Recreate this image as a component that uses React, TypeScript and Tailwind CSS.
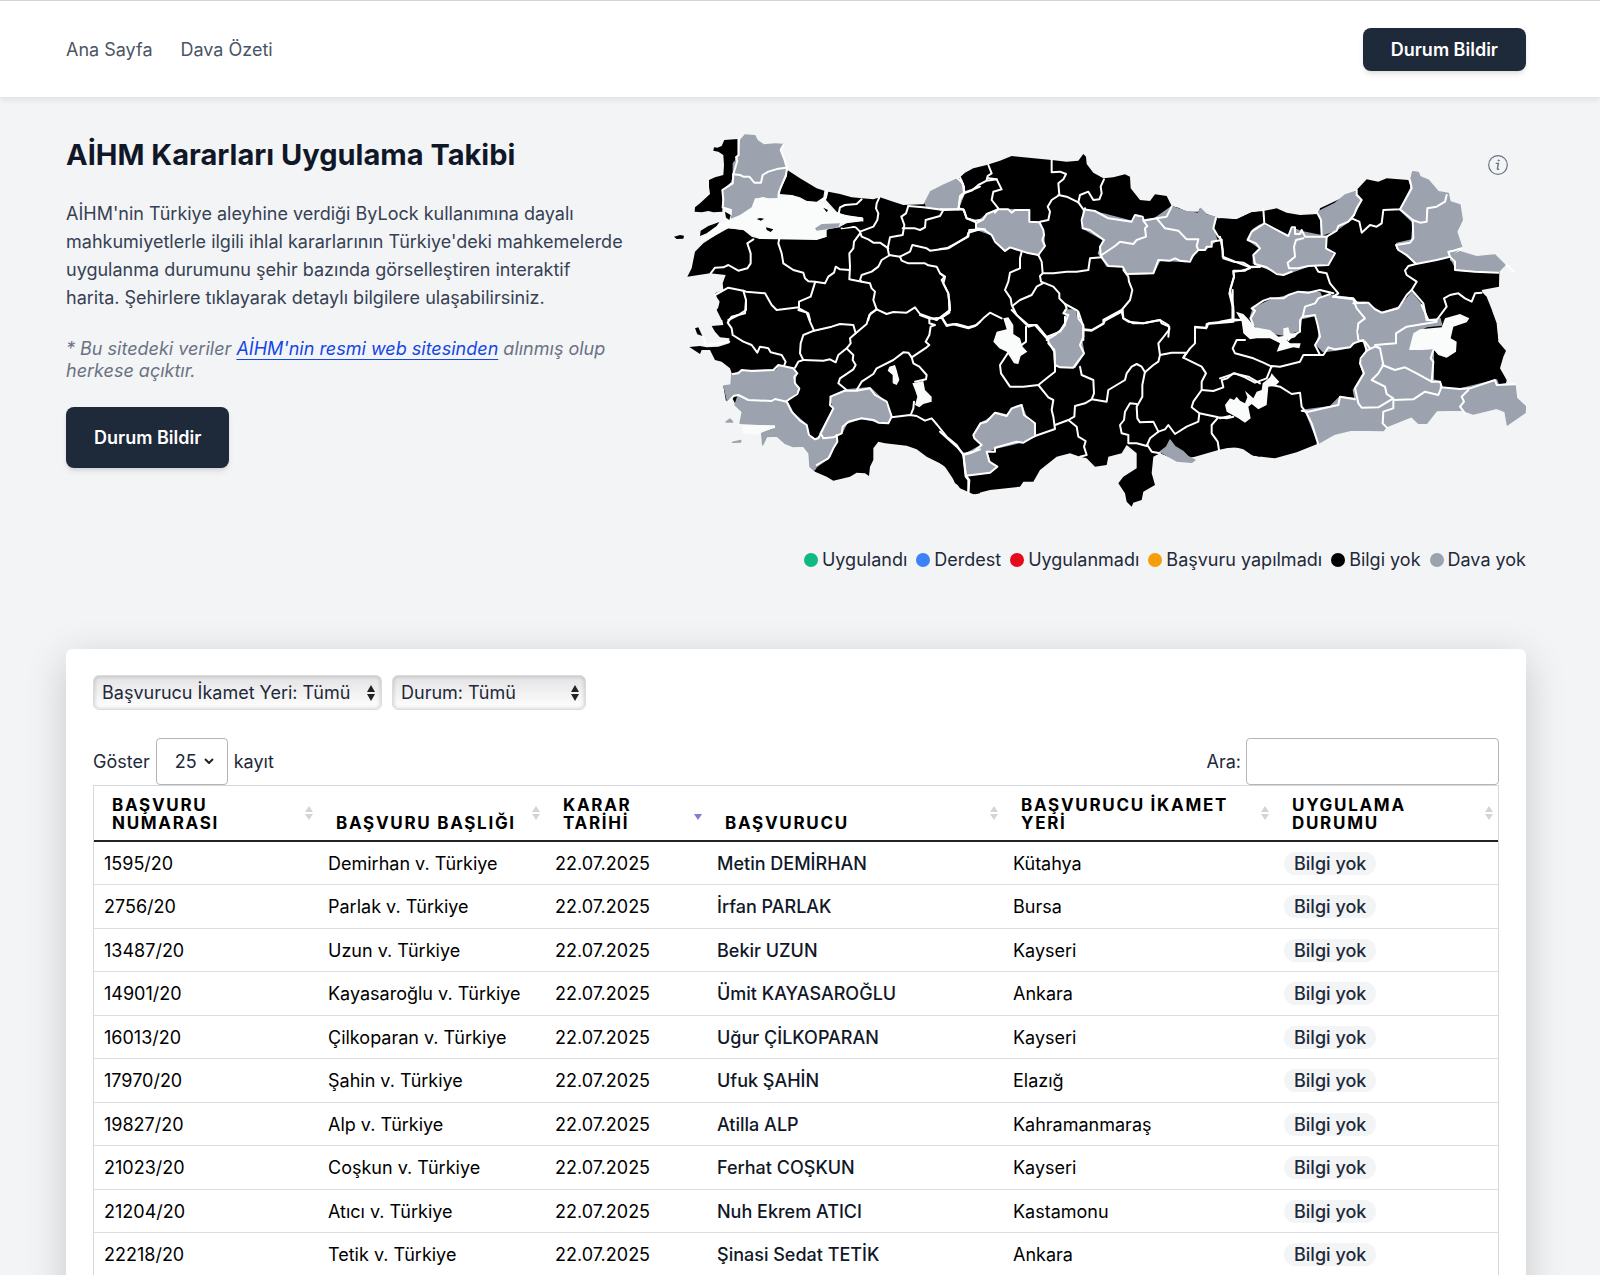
import React from 'react';

const SEA = '#fafbfb';
const NONE = '#9ca3af';

type Sheet = { x: number; y: number; land: string[]; empty: string[]; lines: string[]; water: string[] };

const sheets: Sheet[] = [
  {
    x: 0,
    y: 0,
    land: [
      'M193,60 L233,57 L233,105 L225,120 L218,165 L215,185 L188,210 L187,275 L160,277 L145,273 L125,277 L104,275 L105,262 L120,250 L150,222 L147,200 L147,180 L165,172 L190,165 L192,135 L190,105 L175,95 L160,92 L162,82 L172,83 L185,78Z',
      'M382,150 L420,175 L470,205 L493,212 L490,232 L470,245 L440,243 L420,232 L395,225 L360,222 L362,205 L380,170Z',
      'M505,215 L540,222 L575,232 L640,238 L660,232 L700,245 L730,255 L790,253 L905,172 L960,140 L960,600 L185,600 L170,570 L183,550 L172,535 L165,520 L190,510 L188,490 L197,465 L150,460 L82,470 L95,445 L105,395 L130,370 L160,350 L180,330 L205,325 L250,330 L275,350 L300,357 L330,350 L360,345 L400,350 L440,350 L475,358 L500,350 L490,330 L540,322 L560,312 L608,304 L608,292 L560,287 L530,275 L498,240Z',
    ],
    empty: [
      'M242,60 L255,45 L285,47 L292,62 L312,75 L345,72 L370,73 L362,90 L378,140 L325,152 L308,165 L303,188 L285,188 L268,170 L220,163 L220,130 L235,115Z',
      'M220,163 L268,170 L285,188 L303,188 L308,165 L325,152 L378,145 L378,165 L358,215 L352,232 L330,235 L310,228 L285,235 L275,262 L240,285 L215,295 L213,270 L190,262 L188,212 L215,195Z',
      'M795,248 L812,215 L850,195 L890,178 L905,180 L915,215 L895,265 L850,270 L800,262Z',
    ],
    lines: [
      'M236,57 L236,105 L228,112 L232,122 L220,163 L218,190 L187,210 L190,240 L188,262 L213,270 L212,285',
      'M220,163 L240,165 L250,170 L268,170 L283,188 L303,188 L308,165 L325,155 L355,146 L378,143',
      'M370,75 L362,90 L372,115 L381,145 L378,165 L357,215 L355,230',
      'M500,213 L498,232 L485,242',
      'M605,238 L590,252 L555,255 L540,262 L535,285',
      'M658,232 L650,250 L648,265 L655,280 L652,300 L640,320 L600,335',
      'M545,325 L585,320 L600,335 L605,350 L625,358 L640,368 L660,368 L685,385',
      'M745,258 L738,280 L724,290 L733,315 L728,345 L690,352 L683,385 L687,405 L720,410',
      'M728,325 L765,325 L780,330 L795,322 L797,300 L840,288 L850,270',
      'M600,340 L582,365 L580,385 L568,400 L570,440 L568,478 L605,485 L630,490 L635,505 L645,515 L640,540 L650,568',
      'M690,405 L665,420 L655,440 L635,455 L605,465 L600,480 L605,485',
      'M720,410 L725,422 L745,430 L795,430 L805,436 L830,440 L840,460 L855,470 L845,480 L865,520 L870,570 L850,585 L830,600',
      'M720,410 L750,395 L757,375 L800,385 L810,392 L865,385 L922,350 L925,338 L960,328',
      'M650,568 L680,582 L700,576 L740,578 L765,562 L780,582 L830,600',
      'M650,568 L628,585 L625,600',
      'M152,460 L165,443 L190,442 L205,435 L235,452 L262,445 L272,430 L272,400 L262,370 L280,358',
      'M360,345 L355,370 L365,400 L370,430 L400,450 L430,458 L435,475 L445,484 L465,485 L495,490 L505,470 L522,458 L527,440 L540,448 L568,450',
      'M465,488 L452,530 L417,545 L417,565 L445,580 L450,600',
      'M165,525 L205,503 L250,512 L258,515 L315,520 L335,555 L350,570 L417,562',
      'M250,512 L258,540 L258,570 L235,585 L205,600',
      'M745,258 L790,262 L850,270 L910,268 L920,295 L945,302 L960,300',
      'M893,175 L908,190 L912,218 L900,228 L895,268 M912,218 L935,210 L960,200',
    ],
    water: [
      'M352,235 L395,225 L440,243 L470,247 L490,250 L530,280 L610,294 L610,305 L540,310 L500,330 L500,350 L470,360 L300,357 L250,330 L205,325 L160,350 L120,365 L125,350 L180,310 L240,285 L275,262 L285,235Z',
    ],
  },
  {
    x: 0,
    y: 540,
    land: [
      'M180,0 L175,22 L200,40 L185,50 L190,75 L155,78 L165,95 L180,112 L208,115 L208,130 L175,140 L140,142 L120,138 L88,141 L120,162 L125,150 L150,150 L165,180 L185,185 L210,205 L215,220 L213,255 L190,258 L198,303 L215,290 L230,320 L248,335 L245,370 L345,375 L340,385 L305,400 L308,435 L320,410 L355,410 L375,430 L400,440 L430,438 L447,460 L450,500 L465,515 L500,530 L520,542 L570,530 L590,518 L615,520 L627,528 L630,500 L640,480 L640,445 L655,425 L675,430 L740,437 L770,448 L800,470 L850,495 L870,515 L885,550 L920,572 L945,583 L960,580 L960,0Z',
      'M105,85 L115,82 L127,108 L112,103Z',
    ],
    empty: [
      'M215,225 L245,212 L350,210 L355,198 L400,207 L410,220 L403,245 L417,270 L380,303 L350,298 L260,298 L235,285 L215,290 L203,305 L192,258 L213,255Z',
      'M235,285 L260,298 L350,298 L383,308 L400,340 L440,375 L447,410 L465,417 L485,405 L530,405 L528,425 L510,470 L470,500 L463,510 L450,500 L447,460 L430,438 L400,440 L375,430 L350,408 L320,410 L308,435 L305,400 L345,385 L345,375 L240,370 L247,335 L225,315Z',
      'M510,290 L555,270 L630,263 L675,305 L692,350 L685,370 L600,355 L560,370 L545,400 L490,415 L480,400 L520,325Z',
      'M217,427 L242,421 L242,426Z',
      'M198,366 L210,357 L218,366Z',
    ],
    lines: [
      'M258,0 L255,40 L215,50 L203,68 L215,85 L218,105 L250,125 L275,135 L292,158 L300,140 L325,145 L332,157 L365,165 L377,185 L372,198',
      'M415,30 L440,38 L450,65 L462,92 L430,105 L422,130 L420,160 L430,180 L415,185 L405,203',
      'M462,92 L515,80 L540,72 L580,75 L587,100 L570,115 L572,130 L560,145 L535,165 L527,187 L510,178 L490,182 L430,180',
      'M587,100 L620,72 L625,55 L632,40 L650,28',
      'M560,145 L580,165 L578,180 L587,195 L580,208 L540,235 L535,250 L560,270',
      'M590,270 L605,245 L640,222 L650,205 L700,180 L730,157 L745,158 L755,172 L800,142 L808,135 L797,125 L808,105 L812,80 L825,75 L808,70 L808,56',
      'M755,172 L760,190 L778,200 L800,225 L798,238 L765,245',
      'M780,45 L808,56 L845,53 L860,78 L880,73 L925,85 L945,78 L960,65',
      'M845,53 L868,38 L868,0',
      'M218,222 L235,220 L245,210 L275,213 L340,210 L355,195 L400,205 L412,220 L403,230 L405,250 L418,265 L412,282 L380,303',
      'M205,305 L222,287 L235,285 L265,300 L335,303 L345,297 L380,305 L395,335 L420,362 L440,375 L447,405 L465,418 L475,415 L500,365 L520,325 L510,315 L512,290 L555,272 L590,272 L630,265 L645,285 L680,305 L695,350 L685,370 L655,368 L640,360 L605,355 L565,365 L548,380 L545,400 L520,412 L490,415 L485,405',
      'M530,405 L532,425 L520,445 L505,475 L470,495',
      'M695,352 L750,345 L770,348 L795,362 L815,355 L832,375 L860,410 L890,435 L910,465 L935,458 L960,448',
      'M752,345 L760,325 L762,305',
      'M910,465 L917,530 L925,540 L925,575',
      'M130,112 L137,135 L208,125',
    ],
    water: [
      'M688,200 L705,195 L710,210 L718,240 L710,255 L698,250 L698,225 L683,212Z',
      'M757,250 L790,243 L795,270 L815,290 L815,305 L790,312 L778,322 L765,315 L772,290 L765,270Z',
      'M247,376 L345,376 L345,384 L305,395 L300,405 L247,400Z',
    ],
  },
  {
    x: 840,
    y: 60,
    land: [
      'M0,145 L60,112 L75,98 L100,85 L140,75 L180,62 L215,48 L335,60 L380,65 L415,62 L430,42 L438,50 L440,72 L460,98 L490,115 L520,112 L555,103 L570,110 L572,145 L600,180 L630,183 L645,163 L680,168 L695,198 L715,203 L740,215 L775,215 L780,205 L800,222 L835,235 L890,238 L935,217 L960,215 L960,600 L0,600Z',
    ],
    empty: [
      'M0,145 L45,120 L60,120 L72,158 L55,205 L0,208Z',
      'M108,250 L140,222 L170,208 L268,210 L268,245 L300,247 L312,285 L312,320 L295,345 L240,332 L210,322 L195,333 L155,285 L110,268Z',
      'M430,210 L490,222 L580,245 L590,225 L610,240 L645,235 L695,200 L740,215 L775,220 L782,205 L800,225 L830,232 L820,265 L830,300 L795,330 L770,330 L755,355 L735,365 L660,360 L640,400 L565,402 L550,380 L500,378 L487,355 L475,340 L490,300 L430,265Z',
      'M960,255 L940,268 L922,298 L960,315Z',
      'M960,325 L942,345 L945,368 L960,375Z',
    ],
    lines: [
      'M60,112 L72,140 L72,160 L95,152 L115,135 L140,122 L170,118 L185,148 L160,155 L155,180 L175,205 L165,218',
      'M145,75 L155,100 L143,108 L140,120 M145,115 L170,118',
      'M72,160 L60,180 L55,208 L0,208',
      'M58,205 L72,210 L80,235 L108,247 L108,265',
      'M135,268 L88,270 L85,290 L20,325 L0,327',
      'M108,250 L130,238 L140,222 L175,208 L205,208 L215,218 L225,210 L268,210 L268,245 L298,247 L310,270 L312,285 L307,300 L315,318 L295,345 L260,338 L210,322 L195,333 L165,305 L155,285 L130,268 L108,265Z',
      'M335,60 L335,97 L360,95 L378,102 L370,118 L355,130 L358,165 L335,180 L323,200 L330,215 L325,240 L300,245',
      'M355,165 L380,170 L415,187 L420,165 L445,155 L460,180 L478,178 L485,160 L482,140 L492,118',
      'M415,187 L430,208 L465,213 L505,235 L575,245 L585,225 L608,230 L612,245 L622,258 L615,265 L618,290 L590,300 L580,312 L540,305 L525,318 L485,345',
      'M435,205 L425,240 L428,265 L450,270 L492,300 L480,320 L482,345 L487,355 L505,378 L548,380 L560,402 L640,400 L655,360 L690,362 L705,355 L720,362 L750,365 L758,348 L775,330 L770,318 L775,298 L740,298 L715,272 L675,265 L650,235',
      'M610,242 L650,235 L680,230 L695,200',
      'M775,330 L795,330 L800,320 L815,320 L815,305 L845,300 L835,290 L820,265 L828,232',
      'M845,300 L850,355 L880,365 L910,368 L930,380 L960,380',
      'M295,345 L305,365 L308,400 L340,400 L380,395 L410,395 L445,390 L450,355 L485,352',
      'M308,400 L300,408 L303,425 L340,440 L358,460 L358,475 L375,492 L412,512 L415,535 L430,555 L430,600',
      'M245,335 L240,355 L240,385 L210,398 L205,425 L195,450 L212,475 L215,495 L230,525 L265,555 L290,555 L325,597',
      'M218,497 L240,480 L275,465 L290,440 L308,430',
      'M550,390 L565,410 L567,425 L577,450 L570,480 L545,510 L490,540 L490,550 L455,570 L430,568',
      'M548,510 L550,535 L565,545 L610,550 L660,540 L665,550 L688,560 L685,590',
      'M375,492 L380,505 L370,520 L385,525 L375,550 L362,570 L345,585 L320,600',
      'M0,400 L15,412 L10,430 L25,460 L30,510 L5,530 L20,555 L50,552 L85,562 L110,555 L130,535 L150,518 L185,535',
      'M930,385 L905,392 L880,395 L882,410 L870,450 L880,500 L880,540',
      'M765,600 L765,562 L800,563 L805,550 L900,540',
    ],
    water: [],
  },
  {
    x: 840,
    y: 570,
    land: [
      'M0,0 L960,0 L960,440 L935,435 L910,418 L880,410 L835,420 L765,440 L710,450 L660,430 L640,440 L635,490 L645,525 L610,545 L605,570 L580,578 L575,590 L560,575 L555,550 L535,520 L550,500 L590,475 L590,430 L560,405 L545,430 L505,440 L500,465 L465,470 L440,445 L420,440 L390,430 L350,440 L300,480 L280,515 L250,515 L240,530 L150,540 L100,553 L60,535 L35,500 L15,470 L0,460Z',
    ],
    empty: [
      'M375,0 L405,0 L410,25 L430,50 L425,90 L432,130 L405,172 L350,168 L343,125 L322,80 L360,65 L380,30Z',
      'M100,375 L120,340 L140,330 L170,308 L200,315 L225,290 L245,285 L262,330 L285,345 L285,380 L230,400 L165,415 L140,425 L150,455 L170,470 L150,488 L78,497 L70,435 L125,405Z',
      'M660,425 L680,410 L690,390 L705,410 L730,425 L745,440 L765,450 L755,457 L710,453Z',
    ],
    lines: [
      'M100,375 L122,340 L140,335 L165,308 L200,318 L215,295 L245,285 L252,315 L285,340 L285,378 L250,398 L230,395 L165,413 L165,425 L140,425 L148,455 L172,470 L150,488 L78,497 L70,432 L100,425 L125,405 L103,385Z',
      'M78,497 L88,510 L85,550',
      'M0,365 L50,410 L70,432',
      'M203,130 L190,150 L180,165 L183,190 L210,230 L250,230 L295,225 L320,205 L345,185 L345,160 L343,120 L325,100',
      'M295,225 L325,262 L340,270 L335,300 L340,320 L345,357 L285,378',
      'M345,345 L385,330 L410,350 L415,380 L437,393 L432,410 L440,435 L420,440',
      'M385,330 L403,320 L405,288 L435,280 L455,268 L462,250 L460,210 L425,195 L420,170',
      'M375,20 L375,45 L360,65 L322,80 L325,95 L343,125 L345,165 L360,172 L400,173 L432,130 L420,105 L430,80 L430,50 L415,5',
      'M455,268 L500,275 L505,240 L555,210 L560,190 L575,170 L590,162 L605,170 L615,187 L640,165 L655,155 L660,135 L655,100 L675,75 L688,58 L685,45 L660,30 L610,40 L580,40 L550,25 L545,5',
      'M430,60 L455,62 L490,42 L495,32 L545,5',
      'M615,185 L607,225 L607,260 L590,290 L592,325 L600,337 L640,335 L655,365 L675,358 L685,345 L705,372 L740,350 L775,335 L778,310 L755,292 L760,275 L785,240 L785,215 L798,190 L785,170 L730,143 L740,128 L695,128 L660,135',
      'M730,143 L750,115 L765,100 L765,50 L798,55 L800,42 L880,35 L880,0',
      'M590,282 L570,280 L555,305 L552,330 L540,345 L545,370 L565,375 L565,400 L590,400 L620,408 L630,385 L655,365',
      'M622,405 L635,425 L660,430',
      'M785,240 L820,243 L850,232 L845,210 L862,205 L880,190 L925,200 L960,220',
      'M778,310 L835,322 L860,325 L880,320 M835,322 L815,345 L815,370 L833,395 L837,420',
      'M258,50 L258,95 L245,105',
      'M215,0 L265,50 L285,45 L320,85',
    ],
    water: ['M190,25 L205,22 L220,45 L220,72 L240,85 L248,110 L262,125 L242,138 L235,162 L222,160 L200,125 L178,115 L160,95 L170,65 L200,58Z'],
  },
  {
    x: 1680,
    y: 60,
    land: [
      'M0,235 L50,238 L95,217 L130,213 L170,205 L200,218 L240,225 L295,222 L300,205 L405,155 L410,150 L440,118 L475,125 L500,115 L565,120 L575,150 L640,150 L660,250 L700,300 L690,360 L720,385 L765,395 L838,395 L837,440 L785,450 L795,475 L815,510 L815,545 L830,570 L835,600 L0,600Z',
    ],
    empty: [
      'M295,215 L345,190 L375,165 L405,155 L425,180 L395,238 L350,270 L305,285 L302,235Z',
      'M572,120 L578,95 L595,97 L600,110 L625,120 L655,155 L685,160 L690,185 L720,195 L727,240 L710,275 L725,320 L690,350 L590,370 L530,325 L530,310 L575,300 L580,248 L540,210 L572,145Z',
      'M690,350 L720,335 L770,350 L825,345 L855,375 L835,395 L765,395 L710,390Z',
      'M130,255 L205,290 L220,265 L245,275 L320,290 L315,325 L340,345 L325,370 L265,378 L190,405 L100,370 L100,345 L120,325 L85,300Z',
    ],
    lines: [
      'M130,208 L133,250 L180,275 L205,288 L215,262 L225,262 L225,282 L240,282 L245,270 L255,290 L320,290 L350,272 L355,258 L385,245 L402,225',
      'M133,250 L95,275 L83,300 L108,310 L120,325 L100,345 L105,372 L140,382 L170,402 L190,405 L215,395',
      'M250,295 L228,300 L222,320 L225,350 L203,368 L207,385 L235,385 L265,378 L325,375 L345,340 L318,325 L320,290',
      'M402,225 L410,205 L425,180 L410,165 L410,150',
      'M290,215 L303,240 L305,285',
      'M395,235 L418,245 L425,278 L450,255 L470,260 L485,250 L490,210 L540,208 L575,145 L570,120',
      'M540,208 L578,240 L600,248 L620,245 L622,205 L650,200 L675,185 L680,165',
      'M578,240 L580,295 L570,308 L528,315 L535,330 L560,345 L588,372 L650,360 L690,350 L685,335 L700,332 L725,325',
      'M588,372 L565,378 L555,392 L560,405 L590,425 L575,450 L610,490 L620,540 L650,540 L680,500 L672,475 L690,465 L715,460 L735,475 L755,485 L765,460 L785,458',
      'M690,350 L705,365 L705,390 L765,395 L835,398',
      'M860,375 L880,393',
      'M0,290 L8,330 L8,350 L45,365 L90,382 L75,392 L40,392 L42,410 L28,460 L38,500 L38,535',
      'M90,382 L120,380',
      'M285,378 L295,395 L320,400 L330,430 L355,460 L340,470',
      'M340,470 L400,475 L410,488 L445,488 L465,508 L485,518 L535,505 L560,465 L575,450',
    ],
    water: [],
  },
  {
    x: 1680,
    y: 510,
    land: [
      'M0,90 L300,50 L560,60 L600,50 L640,100 L690,30 L780,0 L800,20 L812,50 L830,100 L835,155 L858,182 L850,200 L840,235 L860,270 L858,280 L720,300 L600,340 L300,400 L290,463 L230,487 L165,505 L100,497 L65,472 L0,475Z',
    ],
    empty: [
      'M100,55 L155,28 L190,20 L240,5 L300,8 L305,20 L250,50 L240,120 L210,130 L205,112 L190,115 L190,135 L130,125 L100,105 L90,85Z',
      'M250,50 L330,15 L400,25 L415,45 L435,90 L410,130 L415,150 L390,172 L350,180 L310,185 L290,165 L298,130 L290,75 L250,85Z',
      'M400,35 L440,40 L485,68 L540,50 L575,8 L605,45 L620,90 L660,85 L665,105 L620,110 L580,130 L570,175 L640,180 L640,270 L660,275 L664,294 L720,297 L830,270 L835,285 L885,285 L890,325 L917,350 L915,368 L862,405 L855,365 L830,355 L760,372 L725,360 L650,362 L620,400 L595,400 L575,380 L500,410 L490,422 L395,420 L345,432 L295,460 L255,360 L330,350 L360,320 L405,325 L400,300 L430,250 L420,220 L440,185 L435,150 L412,145 L430,90Z',
    ],
    lines: [
      'M100,105 L92,85 L105,62 L95,55 L130,32 L150,25 L190,25 L205,15 L235,5 L265,8 L300,0 L340,10',
      'M330,12 L295,25 L285,40 L255,50 L248,80 L285,75 L293,105 L300,140 L285,165 L300,195 L310,195 L325,172 L345,178 L390,172 L400,160 L430,150 L440,182',
      'M248,80 L240,90 L240,125 L215,138 L205,150',
      'M340,20 L400,28 L410,55 L435,85 L415,100 L412,125 L415,150 L435,155 L450,175',
      'M400,40 L435,38 M605,45 L625,90 L650,90',
      'M440,182 L422,205 L420,220 L432,250 L405,295 L415,340 L425,353 L475,352 L520,325 L500,312 L495,290 L455,270 L475,250 L490,225 L480,175 L465,165 L528,160 L528,130 L560,110 L650,95',
      'M440,182 L465,170 L480,175',
      'M487,225 L525,240 L555,232 L590,250 L635,275 L640,215 L632,205 L640,180',
      'M635,275 L660,275 L665,290 L655,315 L615,305 L580,328 L520,330 L520,355 L490,365 L488,400 L500,412',
      'M662,292 L720,297 L750,295 L825,270 L830,285 L885,283',
      'M745,300 L725,320 L732,335 L720,350 L735,370',
      'M245,362 L265,365 L310,355 L355,345 L360,320 L405,328',
      'M0,265 L45,250 L75,262 L105,278 L140,265 L155,228 L180,230 L240,215 L250,195 L300,195',
      'M155,230 L130,218 L100,205 L45,190 L38,175 L50,150 L75,150',
      'M155,285 L180,290 L215,312 L240,308 L245,350 L260,370 L275,400 L295,463',
      'M0,385 L30,378',
      'M38,85 L38,0 M0,95 L38,88 L60,90',
    ],
    water: [
      'M48,65 L70,72 L85,88 L105,112 L150,120 L175,140 L190,138 L190,115 L205,112 L210,130 L235,130 L225,142 L200,150 L210,160 L242,160 L238,175 L220,172 L170,185 L180,160 L150,145 L110,145 L90,148 L70,130 L65,95Z',
      'M15,345 L30,325 L42,330 L50,320 L60,332 L75,340 L82,322 L75,302 L100,325 L110,305 L125,300 L128,280 L150,262 L155,250 L165,262 L178,275 L165,288 L145,290 L140,345 L115,358 L95,342 L85,350 L92,385 L75,398 L55,385 L20,365Z',
      'M580,130 L600,118 L665,112 L675,85 L720,72 L748,85 L740,97 L700,110 L692,145 L710,155 L708,185 L680,203 L655,195 L640,178 L605,180 L567,180Z',
    ],
  },
];

const islands = [
  'M42,350 L60,345 L72,347 L70,356 L50,357Z',
  'M120,348 L122,332 L145,318 L178,306 L170,318 L140,340Z',
  'M290,297 L300,294 L312,296 L303,302Z',
  'M318,322 L340,328 L332,336 L320,330Z',
  'M490,263 L504,270 L500,277Z',
  'M195,275 L212,285 L208,300 L198,293Z',
  'M540,320 L560,310 L608,304 L608,322 L580,318 L550,324Z',
];

function TurkeyMap() {
  return (
    <svg viewBox="39 36 2559 1170" className="block w-full" role="img" aria-label="Türkiye haritası">
      {sheets.map((s, i) => (
        <g key={i} transform={`translate(${s.x} ${s.y})`} fill="#000">
          {s.land.map((d) => <path key={d} d={d} />)}
        </g>
      ))}
      {sheets.map((s, i) => (
        <g key={i} transform={`translate(${s.x} ${s.y})`} fill={NONE} stroke={NONE} strokeWidth="4" strokeLinejoin="round">
          {s.empty.map((d) => <path key={d} d={d} />)}
        </g>
      ))}
      {sheets.map((s, i) => (
        <g key={i} transform={`translate(${s.x} ${s.y})`} fill={SEA}>
          {s.water.map((d) => <path key={d} d={d} />)}
        </g>
      ))}
      {sheets.map((s, i) => (
        <g key={i} transform={`translate(${s.x} ${s.y})`} fill="none" stroke="#fff" strokeWidth="6" strokeLinejoin="round" strokeLinecap="round">
          {s.lines.map((d) => <path key={d} d={d} />)}
        </g>
      ))}
      <g fill="#000">
        {islands.map((d) => <path key={d} d={d} />)}
      </g>
      <path d="M465,325 L485,312 L540,310 L535,322 L500,328 L470,332Z" fill={NONE} />
    </svg>
  );
}

const legend = [
  ['Uygulandı', 'bg-[#10b981]'],
  ['Derdest', 'bg-[#3b82f6]'],
  ['Uygulanmadı', 'bg-[#e30b1c]'],
  ['Başvuru yapılmadı', 'bg-[#f59e0b]'],
  ['Bilgi yok', 'bg-black'],
  ['Dava yok', 'bg-[#9ca3af]'],
];

const columns = [
  ['BAŞVURU NUMARASI', 'w-[224px]'],
  ['BAŞVURU BAŞLIĞI', 'w-[227px]'],
  ['KARAR TARİHİ', 'w-[162px]'],
  ['BAŞVURUCU', 'w-[296px]'],
  ['BAŞVURUCU İKAMET YERİ', 'w-[271px]'],
  ['UYGULAMA DURUMU', 'w-[224px]'],
];

const rows = [
  ['1595/20', 'Demirhan v. Türkiye', 'Metin DEMİRHAN', 'Kütahya'],
  ['2756/20', 'Parlak v. Türkiye', 'İrfan PARLAK', 'Bursa'],
  ['13487/20', 'Uzun v. Türkiye', 'Bekir UZUN', 'Kayseri'],
  ['14901/20', 'Kayasaroğlu v. Türkiye', 'Ümit KAYASAROĞLU', 'Ankara'],
  ['16013/20', 'Çilkoparan v. Türkiye', 'Uğur ÇİLKOPARAN', 'Kayseri'],
  ['17970/20', 'Şahin v. Türkiye', 'Ufuk ŞAHİN', 'Elazığ'],
  ['19827/20', 'Alp v. Türkiye', 'Atilla ALP', 'Kahramanmaraş'],
  ['21023/20', 'Coşkun v. Türkiye', 'Ferhat COŞKUN', 'Kayseri'],
  ['21204/20', 'Atıcı v. Türkiye', 'Nuh Ekrem ATICI', 'Kastamonu'],
  ['22218/20', 'Tetik v. Türkiye', 'Şinasi Sedat TETİK', 'Ankara'],
];

function FilterSelect({ label, width }: { label: string; width: string }) {
  return (
    <div className={`relative ${width}`}>
      <select
        aria-label={label}
        className="h-[35px] w-full appearance-none rounded-md border border-[#dcdcde] bg-linear-to-b from-[#e3e3e5] to-white pr-6 pl-2 text-gray-800 shadow-[inset_0_0_4px_rgba(0,0,0,0.22)]"
      >
        <option>{label}</option>
      </select>
      <svg viewBox="0 0 8 16" className="pointer-events-none absolute top-[10px] right-[7px] h-4 w-2" fill="#222">
        <path d="M4 0 8 7H0ZM4 16 0 9H8Z" />
      </svg>
    </div>
  );
}

export default function App() {
  return (
    <div lang="tr" className="h-screen overflow-hidden bg-gray-100 font-['Inter',sans-serif] text-[18px] text-gray-800">
      <header className="flex h-[97px] items-center justify-between border-t border-gray-300 bg-white pr-[74px] pl-[66px] shadow-[0_3px_6px_rgba(0,0,0,0.08)]">
        <nav className="flex gap-7 text-gray-600">
          <a href="#">Ana Sayfa</a>
          <a href="#">Dava Özeti</a>
        </nav>
        <button className="h-[43px] rounded-lg bg-gray-800 px-7 font-semibold text-white shadow-md">Durum Bildir</button>
      </header>

      <main className="pr-[74px] pl-[66px]">
        <section className="grid grid-cols-[571fr_853fr] gap-9 pt-[35px]">
          <div>
            <h1 className="mt-1 text-[29px] leading-[38px] font-bold text-gray-900">AİHM Kararları Uygulama Takibi</h1>
            <p className="mt-[26px] pr-[10px] leading-7 text-gray-700">
              AİHM'nin Türkiye aleyhine verdiği ByLock kullanımına dayalı mahkumiyetlerle ilgili ihlal kararlarının Türkiye'deki
              mahkemelerde uygulanma durumunu şehir bazında görselleştiren interaktif harita. Şehirlere tıklayarak detaylı
              bilgilere ulaşabilirsiniz.
            </p>
            <p className="mt-[26px] leading-[22px] text-gray-500 italic">
              * Bu sitedeki veriler{' '}
              <a href="#" className="text-blue-700 underline underline-offset-4">AİHM'nin resmi web sitesinden</a> alınmış olup
              herkese açıktır.
            </p>
            <button className="mt-[25px] h-[61px] rounded-lg bg-gray-800 px-7 font-semibold text-white shadow-md">Durum Bildir</button>
          </div>
          <div className="relative">
            <TurkeyMap />
            <button aria-label="Bilgi" className="absolute top-[22px] right-[17px]">
              <svg viewBox="0 0 22 22" className="size-[22px]" fill="none" stroke="#6b7280" strokeLinecap="round">
                <circle cx="11" cy="11" r="9.3" strokeWidth="1.2" />
                <path d="M9.3 9.4h2.1l-1 5.2q-.2 1 1.2.7" strokeWidth="1.4" />
                <circle cx="11.6" cy="6.4" r=".6" fill="#6b7280" strokeWidth=".8" />
              </svg>
            </button>
            <ul className="mt-[25px] flex justify-end gap-[9px] leading-[26px] whitespace-nowrap">
              {legend.map(([name, color]) => (
                <li key={name} className="flex items-center gap-1">
                  <span className={`size-[14px] rounded-full ${color}`} />
                  {name}
                </li>
              ))}
            </ul>
          </div>
        </section>

        <section className="mt-[76px] rounded-md bg-white px-[27px] pt-[26px] pb-8 shadow-[0_10px_40px_rgba(0,0,0,0.18)]">
          <div className="flex gap-[10px]">
            <FilterSelect label="Başvurucu İkamet Yeri: Tümü" width="w-[289px]" />
            <FilterSelect label="Durum: Tümü" width="w-[194px]" />
          </div>
          <div className="mt-7 flex items-center justify-between">
            <div className="flex items-center gap-[6px]">
              <label htmlFor="length">Göster</label>
              <div className="relative">
                <select id="length" className="h-[47px] w-[72px] appearance-none rounded border border-[#b5b5b5] bg-white pl-[18px]">
                  <option>25</option>
                </select>
                <svg viewBox="0 0 10 6" className="pointer-events-none absolute top-5 right-[14px] h-[6px] w-[10px]" fill="none" stroke="#222" strokeWidth="2">
                  <path d="m1 1 4 4 4-4" />
                </svg>
              </div>
              <label htmlFor="length">kayıt</label>
            </div>
            <div className="flex items-center gap-[5px]">
              <label htmlFor="search">Ara:</label>
              <input id="search" type="search" className="h-[47px] w-[253px] rounded border border-[#b5b5b5] bg-white px-2" />
            </div>
          </div>
          <table className="w-full table-fixed border-separate border-spacing-0 border border-[#d6d8db] text-black">
            <thead>
              <tr className="h-[56px]">
                {columns.map(([name, width]) => (
                  <th
                    key={name}
                    className={`${width} relative border-b-2 border-[#222] pr-[28px] pb-2 pl-[18px] text-left align-bottom text-[17px] leading-[18px] font-bold tracking-widest last:pr-20 nth-2:pr-0`}
                  >
                    {name}
                    <svg viewBox="0 0 8 14" className="absolute top-5 right-[5px] h-[14px] w-2">
                      {name === 'KARAR TARİHİ' ? (
                        <path d="M0 8H8L4 14Z" fill="#7b80d0" />
                      ) : (
                        <path d="M4 0 8 6H0ZM0 8H8L4 14Z" fill="#d4d4d4" />
                      )}
                    </svg>
                  </th>
                ))}
              </tr>
            </thead>
            <tbody>
              {rows.map(([no, title, person, city]) => (
                <tr key={no} className="h-[43px] even:h-11 [&>td]:border-b [&>td]:border-[#dcdee1] [&>td]:px-[10px]">
                  <td>{no}</td>
                  <td className="whitespace-nowrap">{title}</td>
                  <td>22.07.2025</td>
                  <td className="font-medium text-gray-900">{person}</td>
                  <td>{city}</td>
                  <td>
                    <span className="inline-block rounded-full bg-gray-100 px-[10px] leading-[23px] font-medium text-gray-800">Bilgi yok</span>
                  </td>
                </tr>
              ))}
            </tbody>
          </table>
        </section>
      </main>
    </div>
  );
}
